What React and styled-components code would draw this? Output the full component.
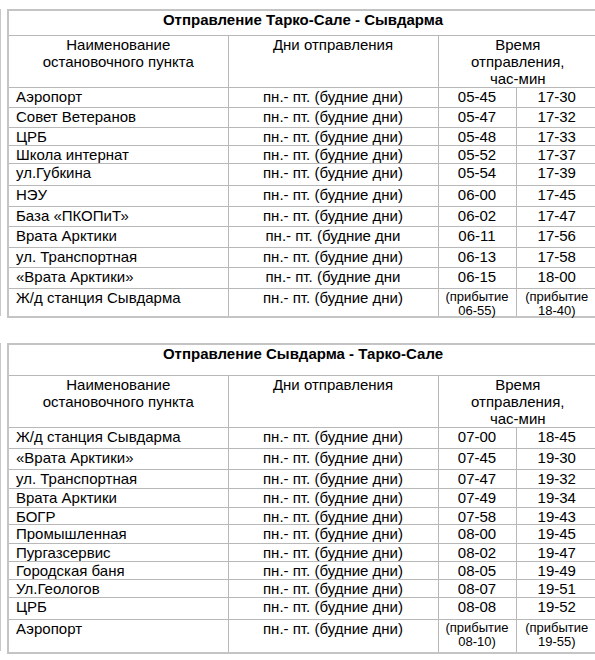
import React from "react";
import styled, { createGlobalStyle } from "styled-components";

const GlobalStyle = createGlobalStyle`
  body {
    margin: 0;
    background: #ffffff;
    font-family: "Liberation Sans", Arial, sans-serif;
    color: #000;
  }
`;

const Page = styled.div`
  display: flex;
  flex-direction: column;
  gap: 25px;
  padding-top: 9px;
`;

const Section = styled.div`
  display: flex;
  align-items: flex-start;
`;

const Stub = styled.div`
  width: 3px;
  margin-right: 6px;
  display: flex;
  flex-direction: column;
  border-right: 1px solid #c8c8c8;
`;

const StubCell = styled.div`
  box-sizing: border-box;
  height: ${(p) => p.$h}px;
  border-top: 1px solid #d0d0d0;
`;

const Table = styled.table`
  border-collapse: collapse;
  table-layout: fixed;
  width: 590px;
  flex: none;
  border: 2px solid #c4c4c4;
  font-size: 15px;
  line-height: 17px;

  td {
    border: 1px solid #b8b8b8;
    vertical-align: top;
    padding: 0 6px;
  }
`;

const Row = styled.tr`
  height: ${(p) => p.$h}px;
`;

const TitleCell = styled.td`
  text-align: center;
  font-weight: bold;
`;

const HeadCell = styled.td`
  text-align: center;
`;

const NameCell = styled.td`
  text-align: left;
  && { padding-left: 7px; }
`;

const DaysCell = styled.td`
  text-align: center;
`;

const TimeCell = styled.td`
  text-align: center;
  && { padding-left: 2px; padding-right: 2px; }
`;

/* fixed-height line so short rows can stay shorter than the text box */
const Line = styled.div`
  height: 14px;
  white-space: nowrap;
`;

const Arrival = styled.div`
  height: 24px;
  padding-top: 1px;
  font-size: 13px;
  line-height: 14px;
`;

const DAYS = "пн.- пт. (будние дни)";
const DAYS_CUT = "пн.- пт. (будние дни";

const outbound = {
  title: "Отправление Тарко-Сале - Сывдарма",
  head: [25, 52],
  rows: [
    ["Аэропорт", DAYS, "05-45", "17-30", 20],
    ["Совет Ветеранов", DAYS, "05-47", "17-32", 20],
    ["ЦРБ", DAYS, "05-48", "17-33", 18],
    ["Школа интернат", DAYS, "05-52", "17-37", 18],
    ["ул.Губкина", DAYS, "05-54", "17-39", 22],
    ["НЭУ", DAYS, "06-00", "17-45", 21],
    ["База «ПКОПиТ»", DAYS, "06-02", "17-47", 20],
    ["Врата Арктики", DAYS_CUT, "06-11", "17-56", 21],
    ["ул. Транспортная", DAYS, "06-13", "17-58", 20],
    ["«Врата Арктики»", DAYS_CUT, "06-15", "18-00", 21],
    ["Ж/д станция Сывдарма", DAYS, ["(прибытие", "06-55)"], ["(прибытие", "18-40)"], 29],
  ],
};

const inbound = {
  title: "Отправление Сывдарма - Тарко-Сале",
  head: [31, 51],
  rows: [
    ["Ж/д станция Сывдарма", DAYS, "07-00", "18-45", 21],
    ["«Врата Арктики»", DAYS, "07-45", "19-30", 21],
    ["ул. Транспортная", DAYS, "07-47", "19-32", 19],
    ["Врата Арктики", DAYS, "07-49", "19-34", 19],
    ["БОГР", DAYS, "07-58", "19-43", 17],
    ["Промышленная", DAYS, "08-00", "19-45", 19],
    ["Пургазсервис", DAYS, "08-02", "19-47", 18],
    ["Городская баня", DAYS, "08-05", "19-49", 18],
    ["Ул.Геологов", DAYS, "08-07", "19-51", 18],
    ["ЦРБ", DAYS, "08-08", "19-52", 22],
    ["Аэропорт", DAYS, ["(прибытие", "08-10)"], ["(прибытие", "19-55)"], 34],
  ],
};

const Time = ({ value }) =>
  Array.isArray(value) ? (
    <Arrival>
      {value[0]}
      <br />
      {value[1]}
    </Arrival>
  ) : (
    <Line>{value}</Line>
  );

const Schedule = ({ data }) => {
  const heights = [...data.head, ...data.rows.map((r) => r[4])];
  return (
    <Section>
      <Stub>
        {heights.map((h, i) => (
          <StubCell key={i} $h={h} />
        ))}
      </Stub>
      <Table>
        <colgroup>
          <col style={{ width: 220 }} />
          <col style={{ width: 210 }} />
          <col style={{ width: 78 }} />
          <col style={{ width: 82 }} />
        </colgroup>
        <tbody>
          <Row $h={data.head[0]}>
            <TitleCell colSpan={4}>{data.title}</TitleCell>
          </Row>
          <Row $h={data.head[1]}>
            <HeadCell>
              Наименование
              <br />
              остановочного пункта
            </HeadCell>
            <HeadCell>Дни отправления</HeadCell>
            <HeadCell colSpan={2}>
              Время
              <br />
              отправления,
              <br />
              час-мин
            </HeadCell>
          </Row>
          {data.rows.map(([name, days, a, b, h]) => (
            <Row key={name + a} $h={h}>
              <NameCell>
                <Line>{name}</Line>
              </NameCell>
              <DaysCell>
                <Line>{days}</Line>
              </DaysCell>
              <TimeCell>
                <Time value={a} />
              </TimeCell>
              <TimeCell>
                <Time value={b} />
              </TimeCell>
            </Row>
          ))}
        </tbody>
      </Table>
    </Section>
  );
};

export default function App() {
  return (
    <>
      <GlobalStyle />
      <Page>
        <Schedule data={outbound} />
        <Schedule data={inbound} />
      </Page>
    </>
  );
}
